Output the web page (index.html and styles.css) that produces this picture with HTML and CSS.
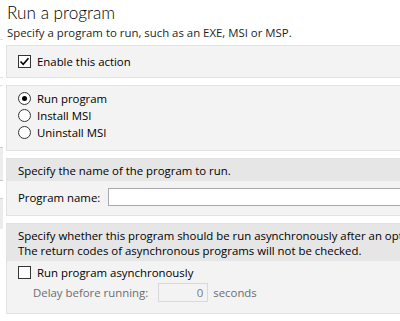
FILE: index.html
```html
<!DOCTYPE html>
<html lang="en">
<head>
    <meta charset="UTF-8">
    <title>Run a program</title>
    <link rel="stylesheet" href="styles.css">
</head>
<body>

<div class="layout">
    <div class="stub">
        <div class="stub-a"></div>
        <div class="stub-b"></div>
        <div class="stub-c"></div>
        <div class="stub-d"></div>
    </div>

    <div class="main">
        <h1 class="title">Run a program</h1>
        <p class="subtitle">Specify a program to run, such as an EXE, MSI or MSP.</p>

        <div class="panel panel-enable">
            <label class="check-row">
                <span class="box checked">
                    <svg width="11" height="11" viewBox="0 0 11 11"><path d="M1.5 5.5 L4.2 8.3 L9.5 2.2" fill="none" stroke="#000" stroke-width="1.6"/></svg>
                </span>
                Enable this action
            </label>
        </div>

        <div class="panel panel-mode">
            <label class="radio-row"><span class="radio selected"></span>Run program</label>
            <label class="radio-row"><span class="radio"></span>Install MSI</label>
            <label class="radio-row"><span class="radio"></span>Uninstall MSI</label>
        </div>

        <div class="panel">
            <div class="panel-head">Specify the name of the program to run.</div>
            <div class="panel-body name-row">
                <span class="field-label">Program name:</span>
                <span class="text-input"></span>
            </div>
        </div>

        <div class="panel">
            <div class="panel-head">
                Specify whether this program should be run asynchronously after an optional delay.<br>
                The return codes of asynchronous programs will not be checked.
            </div>
            <div class="panel-body async-body">
                <label class="check-row"><span class="box"></span>Run program asynchronously</label>
                <div class="delay-row">
                    <span class="disabled">Delay before running:</span>
                    <span class="num-input">0</span>
                    <span class="disabled">seconds</span>
                </div>
            </div>
        </div>
    </div>
</div>

</body>
</html>
```

FILE: styles.css
```css
body {
    margin: 0;
    overflow: hidden;
    background: #fff;
    font-family: "Segoe UI", "Open Sans", sans-serif;
    font-size: 11.4px;
    color: #000;
}
.layout {
    display: flex;
}
.stub {
    width: 3px;
    flex: none;
}
.stub-a {
    height: 39px;
    border-bottom: 1px solid #e0e0e0;
}
.stub-b {
    margin-top: 37px;
    height: 7px;
    border-top: 1px solid #e0e0e0;
    border-bottom: 1px solid #e0e0e0;
}
.stub-c {
    margin-top: 61px;
    height: 32px;
    border-top: 1px solid #d0d0d0;
    background: #ececec;
    border-bottom: 1px solid #c8c8c8;
}
.stub-d {
    margin-top: 17px;
    height: 30px;
    border-top: 1px solid #d0d0d0;
    background: #ececec;
}
.main {
    margin-left: 3px;
    width: 560px;
    flex: none;
}
.title {
    margin: 0;
    padding-left: 1px;
    font-family: Lato, "Open Sans", sans-serif;
    font-weight: 300;
    font-size: 17.2px;
    line-height: 26px;
}
.subtitle {
    margin: 0 0 5px;
    padding-left: 1px;
    line-height: 14px;
    color: #1e1e1e;
}
.panel {
    background: #f3f3f3;
    border: 1px solid #e2e2e2;
    margin-bottom: 7px;
    white-space: nowrap;
}
.panel-enable {
    padding: 7px 11px;
}
.panel-mode {
    padding: 4px 11px 9px;
}
.panel-head {
    background: #e6e6e6;
    padding: 4px 11px 3px;
    line-height: 15px;
}
.panel-body {
    padding: 0 11px;
}
.check-row,
.radio-row {
    display: flex;
    align-items: center;
    gap: 6px;
    height: 17px;
}
.box {
    width: 11px;
    height: 11px;
    border: 1px solid #333;
    background: #fff;
    display: flex;
    align-items: center;
    justify-content: center;
}
.radio {
    width: 11px;
    height: 11px;
    border: 1px solid #333;
    border-radius: 50%;
    background: #fff;
    display: flex;
    align-items: center;
    justify-content: center;
}
.radio.selected::after {
    content: "";
    width: 5px;
    height: 5px;
    border-radius: 50%;
    background: #000;
}
.name-row {
    display: flex;
    align-items: center;
    padding-top: 7px;
    padding-bottom: 9px;
}
.field-label {
    width: 90px;
}
.text-input {
    width: 400px;
    height: 16px;
    border: 1px solid #a9a9a9;
    background: #fff;
}
.async-body {
    padding-top: 3px;
    padding-bottom: 11px;
}
.delay-row {
    display: flex;
    align-items: center;
    gap: 5px;
    height: 19px;
    margin-top: 2px;
    padding-left: 15px;
}
.disabled {
    color: #6d6d6d;
}
.num-input {
    margin-left: 5px;
    width: 44px;
    height: 17px;
    padding-right: 4px;
    border: 1px solid #d9d9d9;
    color: #7a7a7a;
    text-align: right;
    line-height: 17px;
}
```
